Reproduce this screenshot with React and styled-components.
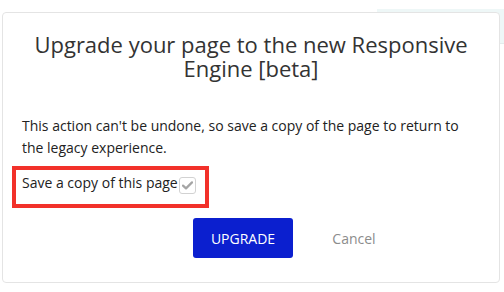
import React from 'react'
import styled, { createGlobalStyle } from 'styled-components'


const GlobalStyle = createGlobalStyle`
  html, body {
    margin: 0;
    padding: 0;
    background: #ffffff;
    font-family: 'Open Sans', 'Liberation Sans', sans-serif;
  }
`

const Backdrop = styled.div`
  width: 504px;
  height: 292px;
  overflow: hidden;
`

const PageStrip = styled.div`
  margin: 9px 0 0 377px;
  height: 34px;
  background: #eef7f7;
  border-bottom: 1px solid #e3ecec;
`

const Modal = styled.div`
  position: fixed;
  top: 12px;
  left: 2px;
  width: 498px;
  height: 271px;
  box-sizing: border-box;
  background: #fff;
  border: 1px solid #e4e4e4;
  border-radius: 4px;
  padding: 19px 19px 0 19px;
  display: flex;
  flex-direction: column;
`

const Title = styled.h2`
  margin: 0;
  font-size: 22px;
  font-weight: 400;
  line-height: 24px;
  color: #333;
  text-align: center;
`

const Body = styled.p`
  margin: 35px 0 0;
  font-size: 14px;
  line-height: 22px;
  color: #222;
`

const Highlight = styled.label`
  align-self: flex-start;
  display: flex;
  align-items: center;
  margin: 7px 0 0 -10px;
  padding: 2px 9px 10px 6px;
  border: 4px solid #f2312a;
  font-size: 14px;
  line-height: 22px;
  color: #222;
`

const Check = styled.span`
  width: 15px;
  height: 15px;
  margin: 4px 0 0 1px;
  border: 1px solid #d2d2d2;
  border-radius: 3px;
  display: flex;
  align-items: center;
  justify-content: center;
`

const Footer = styled.div`
  display: flex;
  gap: 11px;
  margin-top: 10px;
  padding-left: 171px;
`

const Button = styled.button`
  width: 100px;
  height: 40px;
  border: none;
  border-radius: 3px;
  font-family: inherit;
  font-size: 14px;
  background: ${(props) => (props.primary ? '#0b1fcf' : 'transparent')};
  color: ${(props) => (props.primary ? '#fff' : '#8c8c8c')};
  text-transform: ${(props) => (props.primary ? 'uppercase' : 'none')};
  cursor: pointer;
`


export default () => (
  <>
    <GlobalStyle />
    <Backdrop>
      <PageStrip />
    </Backdrop>
    <Modal>
      <Title>Upgrade your page to the new Responsive Engine [beta]</Title>
      <Body>This action can't be undone, so save a copy of the page to return to the legacy experience.</Body>
      <Highlight>
        Save a copy of this page
        <Check>
          <svg width='11' height='9' viewBox='0 0 11 9'>
            <path d='M1 4.6 L4 7.4 L10 1.4' fill='none' stroke='#a5a5a5' strokeWidth='2.2' strokeLinecap='round' strokeLinejoin='round' />
          </svg>
        </Check>
      </Highlight>
      <Footer>
        <Button primary>Upgrade</Button>
        <Button>Cancel</Button>
      </Footer>
    </Modal>
  </>
)
